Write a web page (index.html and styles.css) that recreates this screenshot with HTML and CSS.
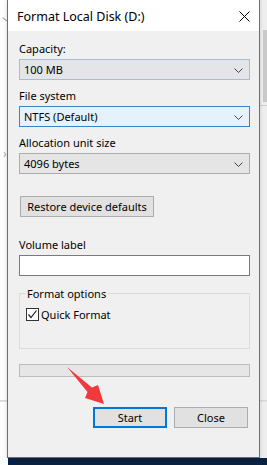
FILE: index.html
```html
<!DOCTYPE html>
<html lang="en">
<head>
    <meta charset="UTF-8">
    <meta name="viewport" content="width=device-width, initial-scale=1.0">
    <title>Format Local Disk (D:)</title>
    <link rel="stylesheet" href="styles.css">
</head>
<body>
    <div class="screen">
        <!-- bits of the windows behind the dialog -->
        <div class="behind-line"></div>
        <div class="behind-slash"></div>
        <div class="behind-chevron">&rsaquo;</div>
        <div class="behind-scroll"></div>
        <div class="behind-edge"></div>

        <div class="dialog">
            <div class="titlebar">
                <span class="title">Format Local Disk (D:)</span>
                <svg class="close-x" width="11" height="11" viewBox="0 0 11 11">
                    <path d="M0.5 0.5 L10.5 10.5 M10.5 0.5 L0.5 10.5" stroke="#000" stroke-width="1" fill="none"/>
                </svg>
            </div>
            <div class="content">
                <div class="field">
                    <div class="field-label">Capacity:</div>
                    <div class="combo combo-hover">
                        <span>100 MB</span>
                        <svg class="chev" width="9" height="5" viewBox="0 0 9 5"><path d="M0.5 0.5 L4.5 4.5 L8.5 0.5" stroke="#444" fill="none"/></svg>
                    </div>
                </div>
                <div class="field">
                    <div class="field-label">File system</div>
                    <div class="combo combo-focus">
                        <span>NTFS (Default)</span>
                        <svg class="chev" width="9" height="5" viewBox="0 0 9 5"><path d="M0.5 0.5 L4.5 4.5 L8.5 0.5" stroke="#444" fill="none"/></svg>
                    </div>
                </div>
                <div class="field">
                    <div class="field-label">Allocation unit size</div>
                    <div class="combo">
                        <span>4096 bytes</span>
                        <svg class="chev" width="9" height="5" viewBox="0 0 9 5"><path d="M0.5 0.5 L4.5 4.5 L8.5 0.5" stroke="#444" fill="none"/></svg>
                    </div>
                </div>

                <button class="btn btn-restore">Restore device defaults</button>

                <div class="field field-volume">
                    <div class="field-label">Volume label</div>
                    <div class="textbox"></div>
                </div>

                <fieldset class="group">
                    <legend>Format options</legend>
                    <div class="check-row">
                        <span class="checkbox">
                            <svg width="11" height="11" viewBox="0 0 11 11"><path d="M1.5 5.5 L4 8.5 L9.5 1.5" stroke="#222" stroke-width="1.2" fill="none"/></svg>
                        </span>
                        <span>Quick Format</span>
                    </div>
                </fieldset>

                <div class="progress"></div>

                <div class="actions">
                    <button class="btn btn-start">Start</button>
                    <button class="btn btn-close">Close</button>
                </div>
            </div>
        </div>
        <div class="taskbar"></div>

        <svg class="arrow" width="50" height="50" viewBox="60 360 50 50">
            <polygon points="67,367 92,387.5 98,385 104,404 85,398 87.5,392" fill="#f0393d"/>
        </svg>
    </div>
</body>
</html>
```

FILE: styles.css
```css
body {
    margin: 0;
    padding: 0;
    background-color: #fff;
    font-family: "Noto Sans", "Liberation Sans", sans-serif;
    font-size: 11px;
    color: #000;
}

.screen {
    position: relative;
    width: 267px;
    height: 465px;
    overflow: hidden;
    background: linear-gradient(to right, #fdfdfd 0, #fdfdfd 8px, #eeeeee 8px);
}

.behind-line {
    position: absolute;
    left: 0;
    top: 400px;
    width: 267px;
    height: 2px;
    background: linear-gradient(#d4d4d4, #e6e6e6);
}

.behind-slash {
    position: absolute;
    left: 2px;
    top: 19px;
    width: 6px;
    height: 1px;
    background-color: #999;
    transform: rotate(40deg);
}

.behind-chevron {
    position: absolute;
    left: 3px;
    top: 148px;
    font-size: 12px;
    line-height: 12px;
    color: #aaa;
}

.behind-scroll {
    position: absolute;
    left: 263px;
    top: 30px;
    width: 4px;
    height: 72px;
    background-color: #c9c9c9;
}

.behind-edge {
    position: absolute;
    left: 260px;
    top: 105px;
    width: 7px;
    height: 1px;
    background-color: #d0d0d0;
}

.dialog {
    position: relative;
    z-index: 1;
    margin-left: 7px;
    width: 251px;
    height: 457px;
    background-color: #f0f0f0;
    border: 1px solid #2b7bd3;
    border-top: none;
    box-shadow: 0 0 4px rgba(0, 0, 0, 0.15);
}

.titlebar {
    height: 31px;
    background-color: #fff;
    display: flex;
    align-items: center;
    justify-content: space-between;
    padding: 0 9px 0 9px;
}

.title {
    font-size: 12.5px;
    padding-top: 1px;
}

.close-x {
    margin-top: 1px;
}

.content {
    padding: 10px 9px 0 11px;
}

.field {
    margin-top: 8px;
}

.field:first-child {
    margin-top: 0;
}

.field-label {
    height: 15px;
    line-height: 15px;
    margin-bottom: 3px;
}

.combo {
    height: 19px;
    border: 1px solid #adadad;
    background-color: #e5e5e5;
    display: flex;
    align-items: center;
    justify-content: space-between;
    padding: 0 6px 0 4px;
}

.combo-hover {
    border-color: #a8bdd3;
    background-color: #e3e5e8;
}

.combo-focus {
    border-color: #3c83c5;
    background-color: #e5f1fb;
}

.chev {
    margin-top: 1px;
}

.btn {
    font-family: "Noto Sans", "Liberation Sans", sans-serif;
    font-size: 11px;
    color: #000;
    background-color: #e1e1e1;
    border: 1px solid #adadad;
    padding: 0;
    height: 21px;
}

.btn-restore {
    display: block;
    margin: 22px 0 0 1px;
    width: 134px;
}

.field-volume {
    margin-top: 20px;
}

.textbox {
    height: 19px;
    background-color: #fff;
    border: 1px solid #7a7a7a;
}

.group {
    margin: 10px 0 0 0;
    padding: 0 6px 27px 6px;
    border: 1px solid #dcdcdc;
}

.group legend {
    padding: 0 1px;
    height: 15px;
    line-height: 15px;
}

.check-row {
    display: flex;
    align-items: center;
    gap: 2px;
    margin-top: 7px;
    height: 13px;
}

.checkbox {
    width: 11px;
    height: 11px;
    border: 1px solid #333;
    background-color: #fff;
    display: flex;
}

.progress {
    margin-top: 15px;
    height: 11px;
    background-color: #e6e6e6;
    border: 1px solid #bcbcbc;
}

.actions {
    display: flex;
    justify-content: flex-end;
    gap: 7px;
    margin-top: 30px;
    padding-right: 2px;
}

.btn-start,
.btn-close {
    width: 74px;
}

.btn-start {
    border: 2px solid #0078d7;
}

.taskbar {
    margin-left: 8px;
    height: 8px;
    background-color: #0b2140;
}

.arrow {
    position: absolute;
    left: 60px;
    top: 360px;
    z-index: 2;
}
```
